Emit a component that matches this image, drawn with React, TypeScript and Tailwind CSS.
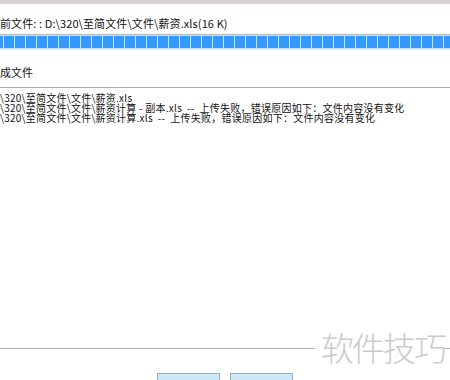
import React from 'react'

const LOG_LINES = [
  '\\320\\至简文件\\文件\\薪资.xls',
  '\\320\\至简文件\\文件\\薪资计算 - 副本.xls  --  上传失败，错误原因如下：文件内容没有变化',
  '\\320\\至简文件\\文件\\薪资计算.xls  --  上传失败，错误原因如下：文件内容没有变化',
]

const BLOCKS = Array.from({ length: 41 }, (_, i) => i)

export default function App() {
  return (
    <div className="relative w-[450px] h-[380px] overflow-hidden bg-white flex flex-col font-['Noto_Sans_CJK_SC',sans-serif] text-[#111]">
      {/* top strip */}
      <div className="h-[4px] bg-[#d4d1d0]" />

      {/* current file */}
      <div className="mt-[13px] h-[12px] text-[11px] leading-[12px] tracking-[0.1px] whitespace-pre">
        {'前文件: : D:\\320\\至简文件\\文件\\薪资.xls(16 K)'}
      </div>

      {/* progress */}
      <div className="mt-[5px] border-t border-[#b4b4b4] border-b border-b-[#d8ebfc] bg-[#c6e1fb] flex gap-px overflow-hidden h-[16px] py-px">
        <div className="w-[3px] shrink-0 bg-[#3399ff]" />
        {BLOCKS.map((i) => (
          <div key={i} className="w-[10px] shrink-0 bg-[#3399ff]" />
        ))}
      </div>

      {/* finished files */}
      <div className="mt-[16px] h-[12px] text-[11px] leading-[12px]">成文件</div>
      <div className="mt-[9px] h-px bg-[#b0b0b0]" />

      <div className="mt-[5px] text-[10px] leading-[10px] tracking-[0.25px] whitespace-pre">
        {LOG_LINES.map((line) => (
          <div key={line}>{line}</div>
        ))}
      </div>

      <div className="flex-1" />
      <div className="h-px bg-[#b0b0b0]" />

      {/* buttons, only their top edge shows */}
      <div className="mt-[24px] h-[7px] flex items-start justify-center gap-[10px]">
        <button className="shrink-0 w-[63px] h-[22px] border border-[#8fb3c4] bg-[#cfe8f3] text-[11px] leading-[12px] pt-[3px]">
          确定
        </button>
        <button className="shrink-0 w-[63px] h-[22px] border border-[#8fb3c4] bg-[#cfe8f3] text-[11px] leading-[12px] pt-[3px]">
          取消
        </button>
      </div>

      {/* watermark */}
      <div className="absolute right-[5px] bottom-[13px] bg-white pl-[6px] text-[33px] leading-[40px] font-light tracking-[-2px] text-[#cbcbcb]">
        软件技巧
      </div>
    </div>
  )
}
